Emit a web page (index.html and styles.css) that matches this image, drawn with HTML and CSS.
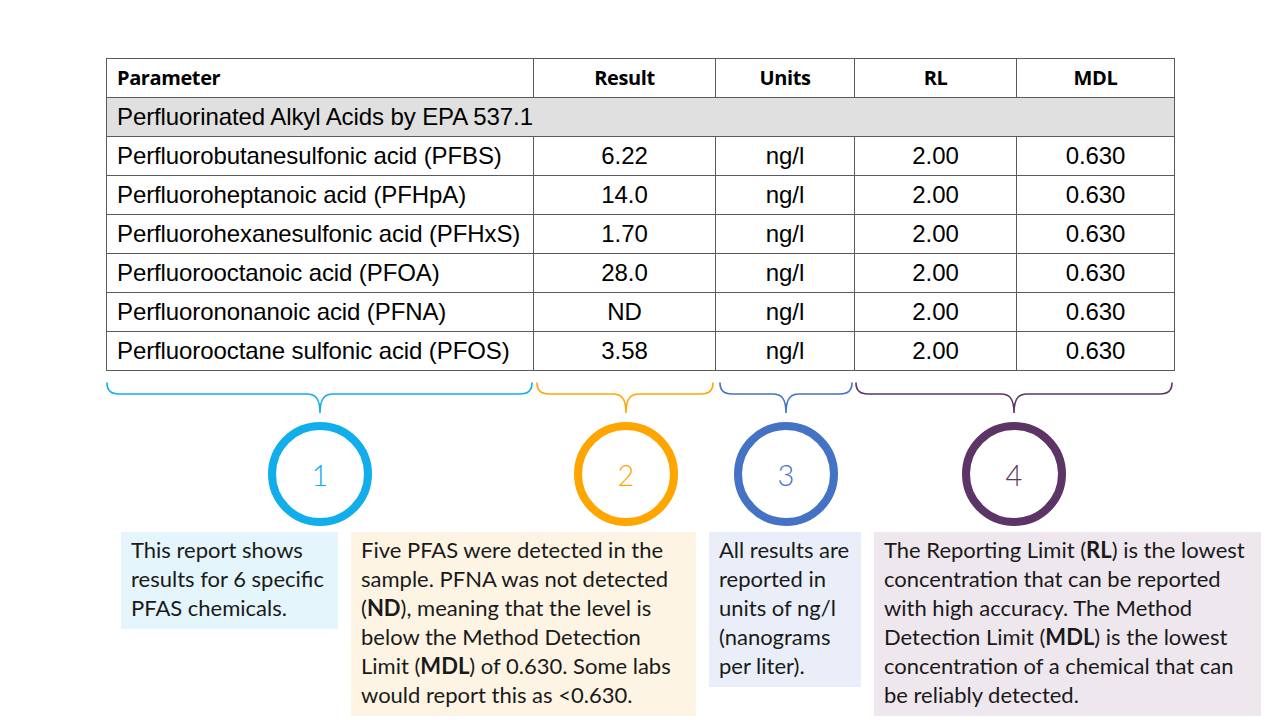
FILE: index.html
```html
<!DOCTYPE html>
<html>
<head>
<meta charset="utf-8">
<link rel="stylesheet" href="styles.css">
</head>
<body>
<main class="page">
  <table class="results">
    <colgroup>
      <col class="c-param"><col class="c-result"><col class="c-units"><col class="c-rl"><col class="c-mdl">
    </colgroup>
    <thead>
      <tr><th class="left">Parameter</th><th>Result</th><th>Units</th><th>RL</th><th>MDL</th></tr>
    </thead>
    <tbody>
      <tr class="group"><td colspan="5">Perfluorinated Alkyl Acids by EPA 537.1</td></tr>
      <tr><td class="left">Perfluorobutanesulfonic acid (PFBS)</td><td>6.22</td><td>ng/l</td><td>2.00</td><td>0.630</td></tr>
      <tr><td class="left">Perfluoroheptanoic acid (PFHpA)</td><td>14.0</td><td>ng/l</td><td>2.00</td><td>0.630</td></tr>
      <tr><td class="left">Perfluorohexanesulfonic acid (PFHxS)</td><td>1.70</td><td>ng/l</td><td>2.00</td><td>0.630</td></tr>
      <tr><td class="left">Perfluorooctanoic acid (PFOA)</td><td>28.0</td><td>ng/l</td><td>2.00</td><td>0.630</td></tr>
      <tr><td class="left">Perfluorononanoic acid (PFNA)</td><td>ND</td><td>ng/l</td><td>2.00</td><td>0.630</td></tr>
      <tr><td class="left">Perfluorooctane sulfonic acid (PFOS)</td><td>3.58</td><td>ng/l</td><td>2.00</td><td>0.630</td></tr>
    </tbody>
  </table>

  <svg class="braces" width="1068" height="36" viewBox="0 0 1068 36" fill="none" stroke-width="1.6" stroke-linecap="round">
    <path stroke="#12AEEC" d="M1,3 C1,10 5,14 13,14 L201,14 C209,14 214,18 214,33 C214,18 219,14 227,14 L414,14 C422,14 426,10 426,3"/>
    <path stroke="#FFA500" d="M431,3 C431,10 435,14 443,14 L507,14 C515,14 520,18 520,33 C520,18 525,14 533,14 L595,14 C603,14 607,10 607,3"/>
    <path stroke="#4472C4" d="M614,3 C614,10 618,14 626,14 L667,14 C675,14 680,18 680,33 C680,18 685,14 693,14 L734,14 C742,14 746,10 746,3"/>
    <path stroke="#5C3566" d="M750,3 C750,10 754,14 762,14 L895,14 C903,14 908,18 908,33 C908,18 913,14 921,14 L1054,14 C1062,14 1066,10 1066,3"/>
  </svg>

  <div class="markers">
    <div class="marker m1">1</div>
    <div class="marker m2">2</div>
    <div class="marker m3">3</div>
    <div class="marker m4">4</div>
  </div>

  <div class="notes">
    <p class="note n1">This report shows<br>results for 6 specific<br>PFAS chemicals.</p>
    <p class="note n2">Five PFAS were detected in the<br>sample. PFNA was not detected<br>(<b>ND</b>), meaning that the level is<br>below the Method Detection<br>Limit (<b>MDL</b>) of 0.630. Some labs<br>would report this as &lt;0.630.</p>
    <p class="note n3">All results are<br>reported in<br>units of ng/l<br>(nanograms<br>per liter).</p>
    <p class="note n4">The Reporting Limit (<b>RL</b>) is the lowest<br>concentration that can be reported<br>with high accuracy. The Method<br>Detection Limit (<b>MDL</b>) is the lowest<br>concentration of a chemical that can<br>be reliably detected.</p>
  </div>
</main>
</body>
</html>
```
FILE: styles.css
```css
html, body {
  margin: 0;
  padding: 0;
  background: #ffffff;
}
.page {
  width: 1280px;
  height: 720px;
  box-sizing: border-box;
  padding: 58px 0 0 106px;
  overflow: hidden;
}
.results {
  border-collapse: collapse;
  width: 1068px;
  table-layout: fixed;
  font-family: "Liberation Sans", Arial, sans-serif;
  font-size: 24px;
  letter-spacing: -0.1px;
  color: #000;
}
.c-param { width: 427px; }
.c-result { width: 182px; }
.c-units { width: 139px; }
.c-rl { width: 162px; }
.c-mdl { width: 158px; }
.results tr { height: 39px; }
.results th, .results td {
  border: 1px solid #5a5a5a;
  padding: 0 10px;
  text-align: center;
  vertical-align: middle;
  white-space: nowrap;
  line-height: 38px;
}
.results th {
  font-family: "Open Sans", sans-serif;
  font-weight: 700;
  font-size: 20px;
  letter-spacing: -0.4px;
}
.results .left { text-align: left; }
.results .group td {
  background: #e0e0e0;
  text-align: left;
}
.braces {
  display: block;
  margin-top: 9px;
}
.markers {
  display: grid;
  grid-template-columns: 428px 184px 136px 320px;
  width: 1068px;
  margin-top: 6px;
}
.marker {
  justify-self: center;
  width: 104px;
  height: 104px;
  box-sizing: border-box;
  border: 8px solid;
  border-radius: 50%;
  display: flex;
  align-items: center;
  justify-content: center;
  font-family: Lato, sans-serif;
  font-weight: 300;
  font-size: 29px;
}
.m1 { color: #12AEEC; }
.m2 { color: #FFA500; }
.m3 { color: #4472C4; }
.m4 { color: #5C3566; }
.notes {
  display: flex;
  align-items: flex-start;
  gap: 13px;
  margin: 6px 0 0 15px;
}
.note {
  margin: 0;
  padding: 3px 10px 7px;
  box-sizing: border-box;
  font-family: Lato, sans-serif;
  font-size: 22px;
  line-height: 29px;
  color: #1a1a1a;
  white-space: nowrap;
}
.note b { font-weight: 700; }
.n1 { width: 217px; background: #e4f5fc; }
.n2 { width: 345px; background: #fef4e4; }
.n3 { width: 152px; background: #e9eef8; }
.n4 { width: 387px; background: #eee7ee; }
```
